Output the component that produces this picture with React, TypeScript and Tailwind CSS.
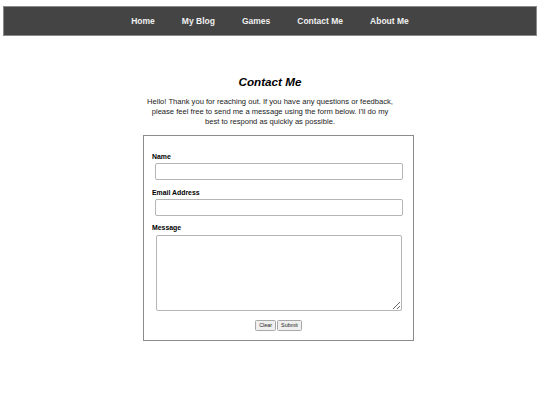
import React from "react";

export default function App() {
  const font = { fontFamily: '"Liberation Sans", Arial, sans-serif' };
  const navItems = ["Home", "My Blog", "Games", "Contact Me", "About Me"];
  return (
    <div className="w-[540px] h-[405px] bg-white pt-[6px]" style={font}>
      <nav className="mx-[3px] h-[30px] bg-[#444444] border border-[#8a8a8a] flex items-center justify-center gap-[27px]">
        {navItems.map((n) => (
          <span key={n} className="text-[8.5px] leading-[10px] font-bold text-[#f0f0f0]">
            {n}
          </span>
        ))}
      </nav>

      <h1 className="mt-[39px] text-center text-[11.7px] leading-[14px] font-bold italic text-black">
        Contact Me
      </h1>

      <p className="mt-[8px] text-center text-[7.6px] leading-[10px] text-[#1a1a1a] whitespace-nowrap">
        Hello! Thank you for reaching out. If you have any questions or feedback,
        <br />
        please feel free to send me a message using the form below. I'll do my
        <br />
        best to respond as quickly as possible.
      </p>

      <form className="mt-[8px] ml-[143px] w-[271px] border border-[#8c8c8c] pt-[17px] pb-[9px] pl-[8px] flex flex-col">
        <label className="text-[6.9px] leading-[8px] font-bold text-black">Name</label>
        <input
          type="text"
          className="mt-[2px] ml-[3px] w-[248px] h-[17px] border border-[#b5b5b5] rounded-[2px] bg-white outline-none"
        />
        <label className="mt-[8.5px] text-[6.9px] leading-[8px] font-bold text-black">
          Email Address
        </label>
        <input
          type="email"
          className="mt-[2.5px] ml-[3px] w-[248px] h-[17px] border border-[#b5b5b5] rounded-[2px] bg-white outline-none"
        />
        <label className="mt-[7.5px] text-[6.9px] leading-[8px] font-bold text-black">
          Message
        </label>
        <textarea className="mt-[3px] ml-[3.5px] w-[246.5px] h-[76px] border border-[#b5b5b5] rounded-[2px] bg-white outline-none" />
        <div className="mt-[9.5px] pr-[8px] flex justify-center gap-[1px]">
          <button
            type="button"
            className="h-[10.5px] px-[3px] border border-[#a8a8a8] rounded-[1.5px] bg-[#efefef] text-[5.4px] leading-[8px] text-[#222]"
          >
            Clear
          </button>
          <button
            type="button"
            className="h-[10.5px] px-[3px] border border-[#a8a8a8] rounded-[1.5px] bg-[#efefef] text-[5.4px] leading-[8px] text-[#222]"
          >
            Submit
          </button>
        </div>
      </form>
    </div>
  );
}
